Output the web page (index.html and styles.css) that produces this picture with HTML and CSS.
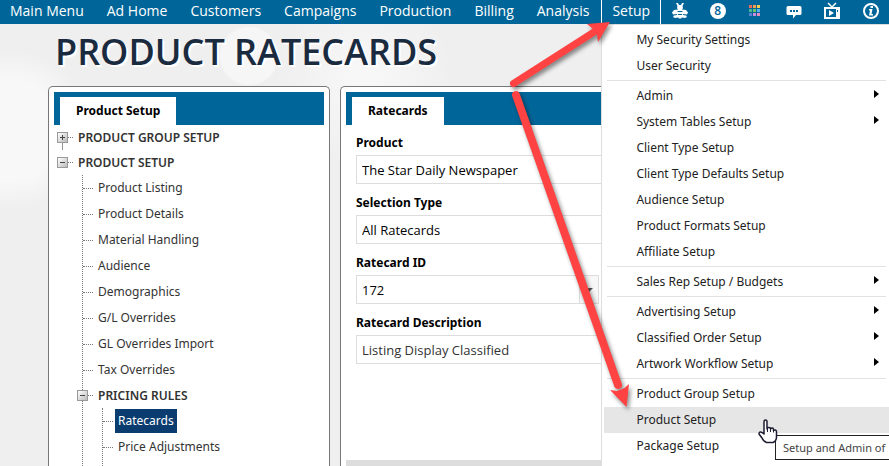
FILE: index.html
```html
<!DOCTYPE html>
<html lang="en">
<head>
<meta charset="utf-8">
<title>Product Ratecards</title>
<link rel="stylesheet" href="styles.css">
</head>
<body>
<nav class="topbar" aria-label="Main">
  <a href="#">Main Menu</a>
  <a href="#">Ad Home</a>
  <a href="#">Customers</a>
  <a href="#">Campaigns</a>
  <a href="#">Production</a>
  <a href="#">Billing</a>
  <a href="#">Analysis</a>
  <div class="menu-anchor">
    <a class="open" href="#">Setup</a>
    <ul class="dropdown">
      <li><a href="#">My Security Settings</a></li>
      <li><a href="#">User Security</a></li>
      <li class="rule"></li>
      <li><a class="more" href="#">Admin</a></li>
      <li><a class="more" href="#">System Tables Setup</a></li>
      <li><a href="#">Client Type Setup</a></li>
      <li><a href="#">Client Type Defaults Setup</a></li>
      <li><a href="#">Audience Setup</a></li>
      <li><a href="#">Product Formats Setup</a></li>
      <li><a href="#">Affiliate Setup</a></li>
      <li class="rule"></li>
      <li><a class="more" href="#">Sales Rep Setup / Budgets</a></li>
      <li class="rule"></li>
      <li><a class="more" href="#">Advertising Setup</a></li>
      <li><a class="more" href="#">Classified Order Setup</a></li>
      <li><a class="more" href="#">Artwork Workflow Setup</a></li>
      <li class="rule"></li>
      <li><a href="#">Product Group Setup</a></li>
      <li class="hover"><a href="#">Product Setup</a></li>
      <li><a href="#">Package Setup</a></li>
    </ul>
  </div>
  <div class="icons">
    <button type="button" aria-label="Bee"><svg viewBox="0 0 18 18"><path fill="#fff" d="M5 1h2l1 2h2l1-2h2l-1.500 3 .5 2-1 1.500L15 8l2 2.500-1 2-4-.5v1l3 .5 1 1.500-2 1-3-.5-1 1H8l-1-1-3 .5-2-1L3 13.500l3-.5v-1l-4 .5-1-2L3 8l4-.5L6 6l.500-2z"/><path stroke="#006699" d="M6.500 9.500l5 0M7 12.500h4"/></svg></button>
    <button type="button" class="count" aria-label="Notifications, 8">8</button>
    <button type="button" aria-label="Apps"><svg viewBox="0 0 18 18" shape-rendering="crispEdges"><path fill="#f0685f" d="M3 3h3v3H3z"/><path fill="#f5a14c" d="M7 3h3v3H7z"/><path fill="#f4cf50" d="M11 3h3v3h-3z"/><path fill="#45b890" d="M3 7h3v3H3z"/><path fill="#6cc66a" d="M7 7h3v3H7z"/><path fill="#5ab0ee" d="M11 7h3v3h-3z"/><path fill="#5d7fd0" d="M3 11h3v3H3z"/><path fill="#c88fd8" d="M7 11h3v3H7z"/><path fill="#e58fc0" d="M11 11h3v3h-3z"/></svg></button>
    <button type="button" aria-label="Messages"><svg viewBox="0 0 18 18"><path fill="#fff" d="M3 4h12q1.500 0 1.500 1.500v6q0 1.500-1.500 1.500h-4L8 16.500V13H3q-1.500 0-1.500-1.500v-6Q1.500 4 3 4z"/><path fill="#006699" d="M5 8h2v2H5zM8 8h2v2H8zM11 8h2v2h-2z"/></svg></button>
    <button type="button" aria-label="Videos"><svg viewBox="0 0 18 18"><path fill="none" stroke="#fff" stroke-width="2" d="M2 6h14v10H2z"/><path fill="none" stroke="#fff" stroke-width="1.500" d="M5 1l4 4 4-4"/><path fill="#fff" d="M6 8l5 3-5 3zM13 6h3v10h-3z"/><path fill="#006699" d="M14 8h1v2h-1z"/></svg></button>
    <button type="button" aria-label="Information"><svg viewBox="0 0 18 18"><circle cx="9" cy="9" r="7" fill="none" stroke="#fff" stroke-width="2"/><path fill="#fff" d="M8.500 4h2.500v2H8.500zM7 7h3.500l-1 5H11v1.500H7l1-5H7z"/></svg></button>
  </div>
</nav>

<main>
  <h1>PRODUCT RATECARDS</h1>
  <div class="panels">
    <section class="panel">
      <div class="tabs"><h2>Product Setup</h2></div>
      <ul class="tree">
        <li class="group joined"><button type="button" class="toggle plus" aria-label="Expand product group setup"></button><a href="#">PRODUCT GROUP SETUP</a></li>
        <li class="group"><button type="button" class="toggle" aria-label="Collapse product setup"></button><a href="#">PRODUCT SETUP</a></li>
      </ul>
      <ul class="tree branch">
        <li><a href="#">Product Listing</a></li>
        <li><a href="#">Product Details</a></li>
        <li><a href="#">Material Handling</a></li>
        <li><a href="#">Audience</a></li>
        <li><a href="#">Demographics</a></li>
        <li><a href="#">G/L Overrides</a></li>
        <li><a href="#">GL Overrides Import</a></li>
        <li><a href="#">Tax Overrides</a></li>
        <li class="group"><button type="button" class="toggle" aria-label="Collapse pricing rules"></button><a href="#">PRICING RULES</a></li>
        <li class="nest">
          <ul class="branch">
            <li><a class="current" href="#">Ratecards</a></li>
            <li><a href="#">Price Adjustments</a></li>
          </ul>
        </li>
      </ul>
    </section>
    <section class="panel content">
      <div class="tabs"><h2>Ratecards</h2></div>
      <form>
        <label for="product">Product</label>
        <input id="product" value="The Star Daily Newspaper">
        <label for="seltype">Selection Type</label>
        <input id="seltype" value="All Ratecards">
        <label for="rcid">Ratecard ID</label>
        <div class="combo">
          <input id="rcid" value="172">
          <button type="button" class="drop" aria-label="Choose ratecard"></button>
          <button type="button" class="next" aria-label="Find ratecard"></button>
        </div>
        <label for="desc">Ratecard Description</label>
        <input id="desc" class="soft" value="Listing Display Classified">
      </form>
      <div class="footer-bar"></div>
    </section>
  </div>
</main>

<svg class="arrows" viewBox="0 0 889 466" aria-hidden="true">
  <g fill="#ff4343" stroke="#ff4343" stroke-linecap="round">
    <path stroke-width="7" d="M513.500 83.500L594 32"/>
    <path stroke="none" d="M610 22L587 24l6 5 4 6 1 7z"/>
    <path stroke-width="8" d="M516 95L618 385"/>
    <path stroke="none" d="M626.500 407L610 390l7 1 7.500-3 4.500-4z"/>
  </g>
</svg>
<div class="tooltip" role="tooltip">Setup and Admin of</div>
<svg class="cursor" viewBox="0 0 20 26" aria-hidden="true"><path fill="#fff" stroke="#1c1c30" stroke-width="1.500" stroke-linejoin="round" d="M6 15V3q0-2 1.500-2T9 3v7q.500-2.500 3.500-1v1q2-2 3 0v1.500Q18.500 10 18.500 13v5q0 4-3.500 5.500H8.500Q5 22 4 19l-3-4q0-3 3-1.500z"/><path fill="none" stroke="#1c1c30" d="M9.500 9v4M12.500 9.500V13M15.500 11v2.500"/></svg>
</body>
</html>
```

FILE: styles.css
```css
* { box-sizing: border-box; }
body {
  margin: 0;
  height: 100vh;
  overflow: hidden;
  display: flex;
  flex-direction: column;
  font: 13px/26px "Open Sans", "Noto Sans", sans-serif;
  color: #222;
  background:
    radial-gradient(circle at 249px 56px, #f6f6f6 28px, transparent 30px),
    radial-gradient(circle at 365px 80px, #f8f8f8, transparent 90px),
    radial-gradient(circle at 10px 130px, #f8f8f8 50px, transparent 80px),
    #efefef;
}
a { color: inherit; text-decoration: none; }
ul { list-style: none; margin: 0; padding: 0; }
button { font: inherit; padding: 0; border: 0; background: none; color: inherit; }

.topbar {
  flex: none;
  display: flex;
  height: 24px;
  background: #006699;
  color: #fff;
  font-size: 14px;
  line-height: 22px;
}
.topbar > a { padding: 0 12px 0 11px; white-space: nowrap; }
.topbar > a:first-child { padding-left: 10px; }
.menu-anchor { position: relative; }
.open { display: block; height: 24px; padding: 0 10px; border-left: 1px solid #fff; border-right: 1px solid #fff; }
.icons { flex: 1; display: flex; justify-content: space-between; align-items: center; padding: 0 9px 3px 10px; }
.icons button { width: 18px; height: 18px; }
.icons svg { display: block; width: 18px; height: 18px; }
.icons .count { width: 16px; height: 16px; border-radius: 8px; background: #fff; color: #006699; font-size: 12px; font-weight: 600; line-height: 16px; }

.dropdown {
  position: absolute;
  z-index: 1;
  left: 0;
  top: 24px;
  width: 288px;
  height: calc(100vh - 24px);
  overflow: hidden;
  padding: 2px 0 0 2px;
  background: #fff;
  border-left: 1px solid #ddd;
  border-top: 1px solid #ddd;
  font-family: "Noto Sans", sans-serif;
  font-size: 12px;
  line-height: 26px;
  color: #222;
}
.dropdown a { display: block; padding-left: 32px; white-space: nowrap; }
.dropdown .rule { height: 1px; margin: 1px 3px 2px; background: #e2e2e2; }
.dropdown .hover { background: #e6e6e6; }
.more { position: relative; }
.more::after {
  content: "";
  position: absolute;
  right: 10px;
  top: 7px;
  border: 4px solid transparent;
  border-left: 5px solid #000;
  border-right: 0;
}

main { flex: 1; min-height: 0; display: flex; flex-direction: column; }
h1 {
  margin: 0;
  padding-left: 55px;
  font-size: 36px;
  font-weight: 600;
  line-height: 56px;
  height: 62px;
  color: #1b2b3f;
  text-shadow: 2px 2px 0 #fff;
  white-space: nowrap;
}
.panels { flex: 1; min-height: 0; display: grid; grid-template-columns: 282px 1fr; gap: 10px; padding-left: 48px; }
.panel { background: #fff; border: 1px solid #777; border-bottom: 0; border-radius: 5px 5px 0 0; padding: 5px 5px 0; overflow: hidden; }
.content { border-right: 0; border-top-right-radius: 0; padding-right: 0; display: flex; flex-direction: column; }
.tabs { display: flex; background: #006699; padding: 5px 6px 0; }
h2, label { font-family: "Noto Sans", sans-serif; font-size: 12px; font-weight: 700; color: #000; }
h2 { margin: 0; padding: 0 16px; background: #fff; line-height: 28px; }

.tree { padding-left: 3px; color: #333; font-family: "Noto Sans", sans-serif; font-size: 12px; }
.tree li { display: flex; align-items: center; height: 26px; }
.tree .group { font-weight: 600; height: 25px; }
.tree a { padding: 0 3px; margin-left: 2px; line-height: 24px; white-space: nowrap; }
.toggle {
  width: 11px;
  height: 11px;
  border: 1px solid #999;
  background:
    linear-gradient(#444, #444) center / 5px 1px no-repeat,
    linear-gradient(135deg, #fff, #bbb);
}
.plus {
  background:
    linear-gradient(#444, #444) center / 5px 1px no-repeat,
    linear-gradient(#444, #444) center / 1px 5px no-repeat,
    linear-gradient(135deg, #fff, #bbb);
}
.toggle + a { margin-left: 0; }
.tree .group .toggle { flex: none; }
.tree .group::after { content: ""; order: 1; width: 5px; margin-right: 2px; border-top: 1px dotted #777; }
.tree .group a { order: 2; }
.joined { background: linear-gradient(#999, #999) 5px 100% / 1px 8px no-repeat; }
.branch { border-left: 1px dotted #777; }
.tree.branch { margin-left: 28px; padding-left: 0; }
.branch li:not(.group, .nest)::before { content: ""; width: 10px; border-top: 1px dotted #777; }
.branch .group .toggle { margin-left: -6px; }
.tree .nest { height: 60px; align-items: flex-start; }
.nest .branch { margin-left: 19px; height: 60px; }
.current { background: #0a3c70; color: #fff; }

form { display: flex; flex-direction: column; padding: 8px 0 0 10px; }
label { height: 22px; line-height: 20px; }
input {
  width: 100%;
  height: 29px;
  margin: 0 0 9px;
  padding: 0 5px;
  border: 1px solid #ddd;
  background: #fff;
  color: #000;
  font: inherit;
}
.soft { color: #333; }
.combo { display: flex; height: 38px; }
.combo input { width: 224px; }
.drop { width: 19px; height: 29px; border: 1px solid #ddd; border-left: 0; background: #f7f7f7; }
.drop::before { content: ""; display: block; width: 0; margin: 0 auto; border: 4px solid transparent; border-top-color: #555; border-bottom: 0; }
.next { width: 30px; height: 29px; margin-left: 2px; border: 1px solid #bbb; background: #eee; }
.footer-bar { height: 6px; margin-top: auto; background: #ddd; }

.arrows { position: absolute; z-index: 2; left: 0; top: 0; width: 889px; height: 466px; pointer-events: none; filter: drop-shadow(2px 3px 2px rgba(0, 0, 0, .45)); }
.tooltip {
  position: absolute;
  z-index: 3;
  left: 775px;
  right: 0;
  top: 435px;
  height: 25px;
  padding-left: 7px;
  border: 1px solid #222;
  border-right: 0;
  background: #fff;
  color: #444;
  font-family: "Noto Sans", sans-serif;
  font-size: 11px;
  line-height: 24px;
  white-space: nowrap;
}
.cursor { position: absolute; z-index: 4; left: 758px; top: 419px; width: 20px; height: 26px; }
```
